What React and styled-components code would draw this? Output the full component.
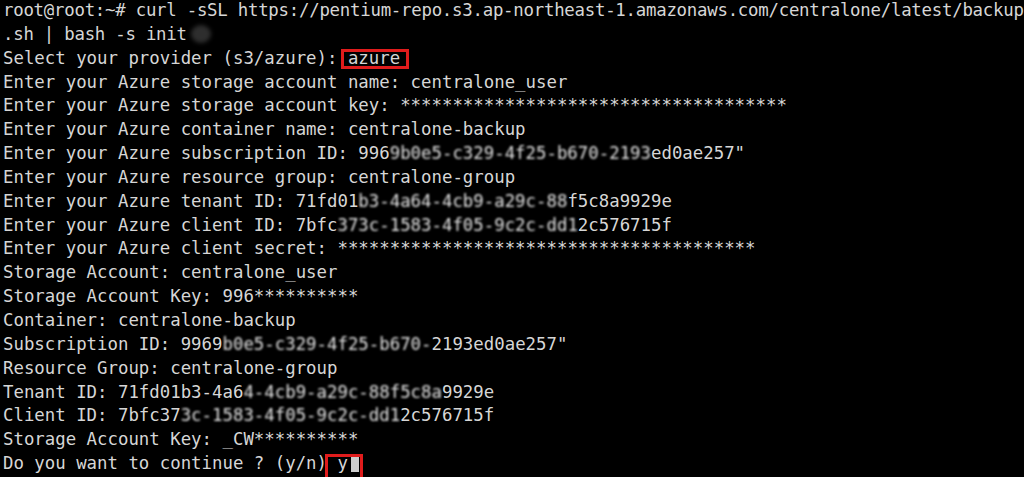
import React from "react";
import styled, { createGlobalStyle } from "styled-components";

const Global = createGlobalStyle`
  html, body { margin: 0; padding: 0; background: #000; }
  body { overflow: hidden; }
`;

const Terminal = styled.div`
  width: 1024px;
  height: 477px;
  background: #000;
  color: #d6d6d6;
  font-family: "DejaVu Sans Mono", "Liberation Mono", monospace;
  font-size: 17.36px;
  line-height: 23.85px;
  padding: 0 0 0 3px;
  box-sizing: border-box;
  overflow: hidden;
  display: flex;
  flex-direction: column;
`;

const Line = styled.div`
  white-space: pre;
  height: 23.85px;
  letter-spacing: ${(p) => (p.$tight ? "-0.245px" : "0")};
  position: relative;
  margin-top: -1px;
  margin-bottom: 1px;
`;

const Masked = styled.span`
  filter: blur(${(p) => p.$amount || 1.1}px);
  color: #e4e4e4;
`;

const Blob = styled.span`
  display: inline-block;
  width: 20px;
  height: 18px;
  margin-left: 4px;
  border-radius: 50%;
  background: #2e2e2e;
  filter: blur(2px);
  vertical-align: -3px;
`;

const Boxed = styled.span`
  position: relative;
  &::after {
    content: "";
    position: absolute;
    left: ${(p) => p.$left}px;
    right: ${(p) => p.$right}px;
    top: ${(p) => p.$top}px;
    bottom: ${(p) => p.$bottom}px;
    border: 3px solid #e01c1c;
    pointer-events: none;
  }
`;

const Cursor = styled.span`
  display: inline-block;
  width: 8px;
  height: 17px;
  margin-left: 3px;
  background: #cdcdcd;
  vertical-align: -3px;
`;

const stars = (n) => "*".repeat(n);

export default function App() {
  return (
    <>
      <Global />
      <Terminal>
        <Line $tight>root@root:~# curl -sSL https://pentium-repo.s3.ap-northeast-1.amazonaws.com/centralone/latest/backup</Line>
        <Line $tight>.sh | bash -s init<Blob /></Line>
        <Line>
          Select your provider (s3/azure):{" "}
          <Boxed $left={-7} $right={-9} $top={1} $bottom={-1}>azure</Boxed>
        </Line>
        <Line>Enter your Azure storage account name: centralone_user</Line>
        <Line>Enter your Azure storage account key: {stars(37)}</Line>
        <Line>Enter your Azure container name: centralone-backup</Line>
        <Line>
          Enter your Azure subscription ID: 996<Masked>9b0e5-c329-4f25-b670-2193</Masked>ed0ae257"
        </Line>
        <Line>Enter your Azure resource group: centralone-group</Line>
        <Line>
          Enter your Azure tenant ID: 71fd01<Masked>b3-4a64-4cb9-a29c-88</Masked>f5c8a9929e
        </Line>
        <Line>
          Enter your Azure client ID: 7bfc<Masked>373c-1583-4f05-9c2c-dd1</Masked>2c576715f
        </Line>
        <Line>Enter your Azure client secret: {stars(40)}</Line>
        <Line>Storage Account: centralone_user</Line>
        <Line>Storage Account Key: 996{stars(10)}</Line>
        <Line>Container: centralone-backup</Line>
        <Line>
          Subscription ID: 9969<Masked>b0e5-c329-4f25-b670-</Masked>2193ed0ae257"
        </Line>
        <Line>Resource Group: centralone-group</Line>
        <Line>
          Tenant ID: 71fd01b3-4a6<Masked>4-4cb9-a29c-88f5c8a</Masked>9929e
        </Line>
        <Line>
          Client ID: 7bfc37<Masked>3c-1583-4f05-9c2c-dd1</Masked>2c576715f
        </Line>
        <Line>Storage Account Key: _CW{stars(10)}</Line>
        <Line>
          Do you want to continue ? (y/n){" "}
          <Boxed $left={-12} $right={-4} $top={1} $bottom={-8}>y<Cursor /></Boxed>
        </Line>
      </Terminal>
    </>
  );
}
